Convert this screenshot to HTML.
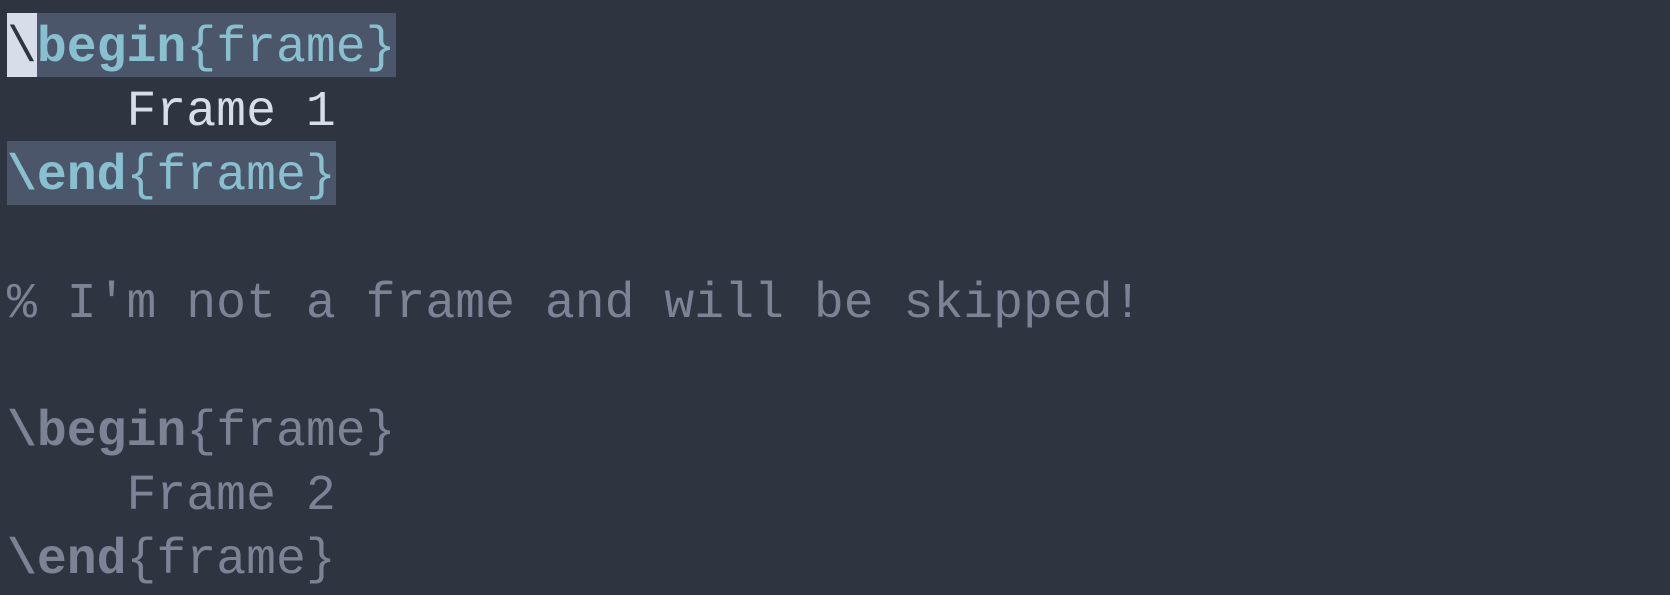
<!DOCTYPE html>
<html><head><style>
html,body{margin:0;padding:0;width:1670px;height:595px;background:#2e3440;overflow:hidden}
.l{position:absolute;left:7px;height:64px;line-height:64px;font-family:"Liberation Mono",monospace;font-size:49.8px;white-space:pre;color:#d8dee9}
.l span.t{position:relative;top:3px}
.c{color:#88c0d0}.b{font-weight:bold}
.hl{background:#4c566a;display:inline-block;height:64px}
.cur{background:#d8dee9;color:#2e3440;display:inline-block;height:64px}
.g{color:#7b8394}
</style></head><body>
<div class="l" style="top:13px"><span class="hl"><span class="cur"><span class="t">\</span></span><span class="c b t">begin</span><span class="c t">{frame}</span></span></div>
<div class="l" style="top:77px"><span class="t">    Frame 1</span></div>
<div class="l" style="top:141px"><span class="hl"><span class="c b t">\end</span><span class="c t">{frame}</span></span></div>
<div class="l g" style="top:269px"><span class="t">% I'm not a frame and will be skipped!</span></div>
<div class="l g" style="top:397px"><span class="b t">\begin</span><span class="t">{frame}</span></div>
<div class="l g" style="top:461px"><span class="t">    Frame 2</span></div>
<div class="l g" style="top:525px"><span class="b t">\end</span><span class="t">{frame}</span></div>
</body></html>
